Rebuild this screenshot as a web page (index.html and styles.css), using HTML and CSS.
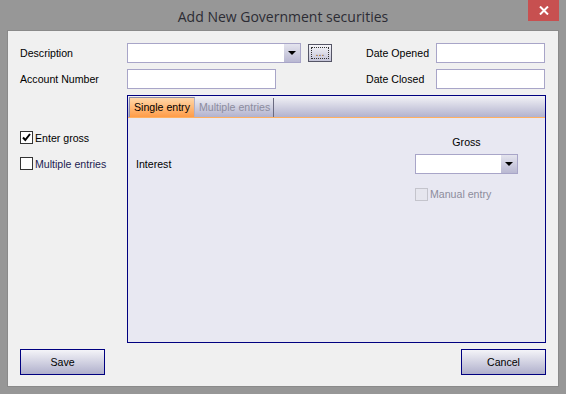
FILE: index.html
```html
<!DOCTYPE html>
<html lang="en">
<head>
    <meta charset="UTF-8">
    <title>Add New Government securities</title>
    <link rel="stylesheet" href="styles.css">
</head>
<body>
    <div class="window">
        <div class="titlebar">
            <span></span>
            <span class="title">Add New Government securities</span>
            <button class="close">
                <svg width="10" height="9" viewBox="0 0 10 9"><path d="M1 0.5 L9 8.5 M9 0.5 L1 8.5" stroke="#fff" stroke-width="2"/></svg>
            </button>
        </div>
        <div class="client">
            <div class="top-form">
                <label>Description</label>
                <div class="combo">
                    <div class="combo-text"></div>
                    <div class="combo-btn"><span class="arrow"></span></div>
                </div>
                <span></span>
                <button class="ellipsis"><span>...</span></button>
                <span></span>
                <label>Date Opened</label>
                <div class="textbox"></div>

                <label>Account Number</label>
                <div class="textbox short"></div>
                <span></span>
                <span></span>
                <span></span>
                <label>Date Closed</label>
                <div class="textbox"></div>
            </div>

            <div class="main">
                <div class="options">
                    <div class="check-row">
                        <span class="checkbox checked">
                            <svg width="11" height="11" viewBox="0 0 11 11"><path d="M2 5.5 L4.3 8 L9 2" fill="none" stroke="#000" stroke-width="2"/></svg>
                        </span>
                        <span>Enter gross</span>
                    </div>
                    <div class="check-row navy">
                        <span class="checkbox"></span>
                        <span>Multiple entries</span>
                    </div>
                </div>

                <div class="tabs">
                    <div class="tab-strip">
                        <div class="tab active">Single entry</div>
                        <div class="tab">Multiple entries</div>
                    </div>
                    <div class="tab-page">
                        <span></span>
                        <div class="gross-label">Gross</div>
                        <div class="interest">Interest</div>
                        <div class="combo">
                            <div class="combo-text"></div>
                            <div class="combo-btn"><span class="arrow"></span></div>
                        </div>
                        <span></span>
                        <div class="check-row disabled">
                            <span class="checkbox"></span>
                            <span>Manual entry</span>
                        </div>
                    </div>
                </div>
            </div>

            <div class="buttons">
                <button class="btn">Save</button>
                <button class="btn">Cancel</button>
            </div>
        </div>
    </div>
</body>
</html>
```

FILE: styles.css
```css
body {
    margin: 0;
    padding: 0;
    font-family: "Liberation Sans", Arial, sans-serif;
    font-size: 10.6px;
    color: #000000;
}
.window {
    width: 566px;
    height: 394px;
    background-color: #979797; /* window frame */
    box-sizing: border-box;
}
.titlebar {
    display: grid;
    grid-template-columns: 1fr auto 1fr;
    height: 30px;
    padding: 0 7px;
}
.title {
    font-family: "Open Sans", sans-serif;
    font-size: 14px;
    color: #2c2c34;
    line-height: 33px;
}
.close {
    justify-self: end;
    width: 31px;
    height: 21px;
    border: none;
    padding: 0;
    background-color: #c75050;
    display: flex;
    align-items: center;
    justify-content: center;
}
.client {
    margin: 0 7px;
    height: 357px;
    background-color: #f0f0f0;
    border: 1px solid #8a8a8a;
    padding: 12px 12px 11px 12px;
    box-sizing: border-box;
    display: flex;
    flex-direction: column;
}

/* top fields */
.top-form {
    display: grid;
    grid-template-columns: 107px 174px 7px 24px 34px 70px 109px;
    grid-template-rows: 20px 20px;
    row-gap: 6px;
    align-items: center;
}
.top-form label {
    line-height: 20px;
}
.textbox {
    height: 20px;
    background-color: #ffffff;
    border: 1px solid #a8a5c8;
    box-sizing: border-box;
}
.textbox.short {
    width: 149px;
}
.combo {
    display: flex;
    height: 20px;
    background-color: #ffffff;
    border: 1px solid #a8a5c8;
    box-sizing: border-box;
}
.combo-text {
    flex: 1;
}
.combo-btn {
    width: 16px;
    background: linear-gradient(#e4e4ee, #b9b8d2);
    display: flex;
    align-items: center;
    justify-content: center;
}
.arrow {
    width: 0;
    height: 0;
    border-left: 4px solid transparent;
    border-right: 4px solid transparent;
    border-top: 4px solid #000000;
}
.ellipsis {
    width: 24px;
    height: 18px;
    padding: 2px;
    border: 1px solid #555566;
    background: linear-gradient(#f4f4f8, #c4c4d8);
    box-sizing: border-box;
}
.ellipsis span {
    display: block;
    height: 100%;
    border: 1px dotted #333333;
    box-sizing: border-box;
    font-size: 11px;
    line-height: 9px;
    color: #8a5a20;
}

/* middle section */
.main {
    display: flex;
    margin-top: 6px;
    height: 248px;
}
.options {
    width: 107px;
    padding-top: 36px;
    box-sizing: border-box;
}
.check-row {
    display: flex;
    align-items: center;
    gap: 2px;
    height: 13px;
    margin-bottom: 13px;
}
.check-row.navy {
    color: #1c1c50;
}
.checkbox {
    width: 13px;
    height: 13px;
    background-color: #ffffff;
    border: 1px solid #333333;
    box-sizing: border-box;
    display: flex;
    align-items: center;
    justify-content: center;
}
.check-row.disabled {
    color: #8c8c9c;
}
.check-row.disabled .checkbox {
    background-color: #e6e6ee;
    border-color: #c4c4cc;
}

.tabs {
    flex: 1;
    border: 1px solid #000080;
    display: flex;
    flex-direction: column;
    background-color: #e8e8f2;
}
.tab-strip {
    height: 20px;
    padding: 1px 0 0 1px;
    background: linear-gradient(#f2f2f6, #b2b2ce);
    border-bottom: 1px solid #ffb060;
    display: flex;
    align-items: flex-end;
}
.tab {
    height: 19px;
    line-height: 19px;
    padding: 0 3px 0 4px;
    color: #8c8c9e;
    border-right: 1px solid #6a6a80;
}
.tab.active {
    color: #000000;
    background: linear-gradient(#ffd7a8, #ff9c48);
    border: 1px solid #8c8ca8;
    border-bottom: none;
    border-right-color: #b0b0c8;
    padding: 0 4px 0 4px;
}
.tab-page {
    flex: 1;
    display: grid;
    grid-template-columns: 1fr 103px;
    grid-template-rows: 14px 20px 22px;
    row-gap: 5px;
    align-items: center;
    padding: 17px 27px 0 8px;
    align-content: start;
}
.gross-label {
    text-align: center;
}
.tab-page .check-row {
    margin: 8px 0 0 0;
}

/* bottom buttons */
.buttons {
    display: flex;
    justify-content: space-between;
    margin-top: 6px;
}
.btn {
    width: 85px;
    height: 26px;
    border: 1px solid #000080;
    background: linear-gradient(#f4f4f8, #b0b0cc);
    font-family: "Liberation Sans", Arial, sans-serif;
    font-size: 10.6px;
    color: #000000;
}
```
